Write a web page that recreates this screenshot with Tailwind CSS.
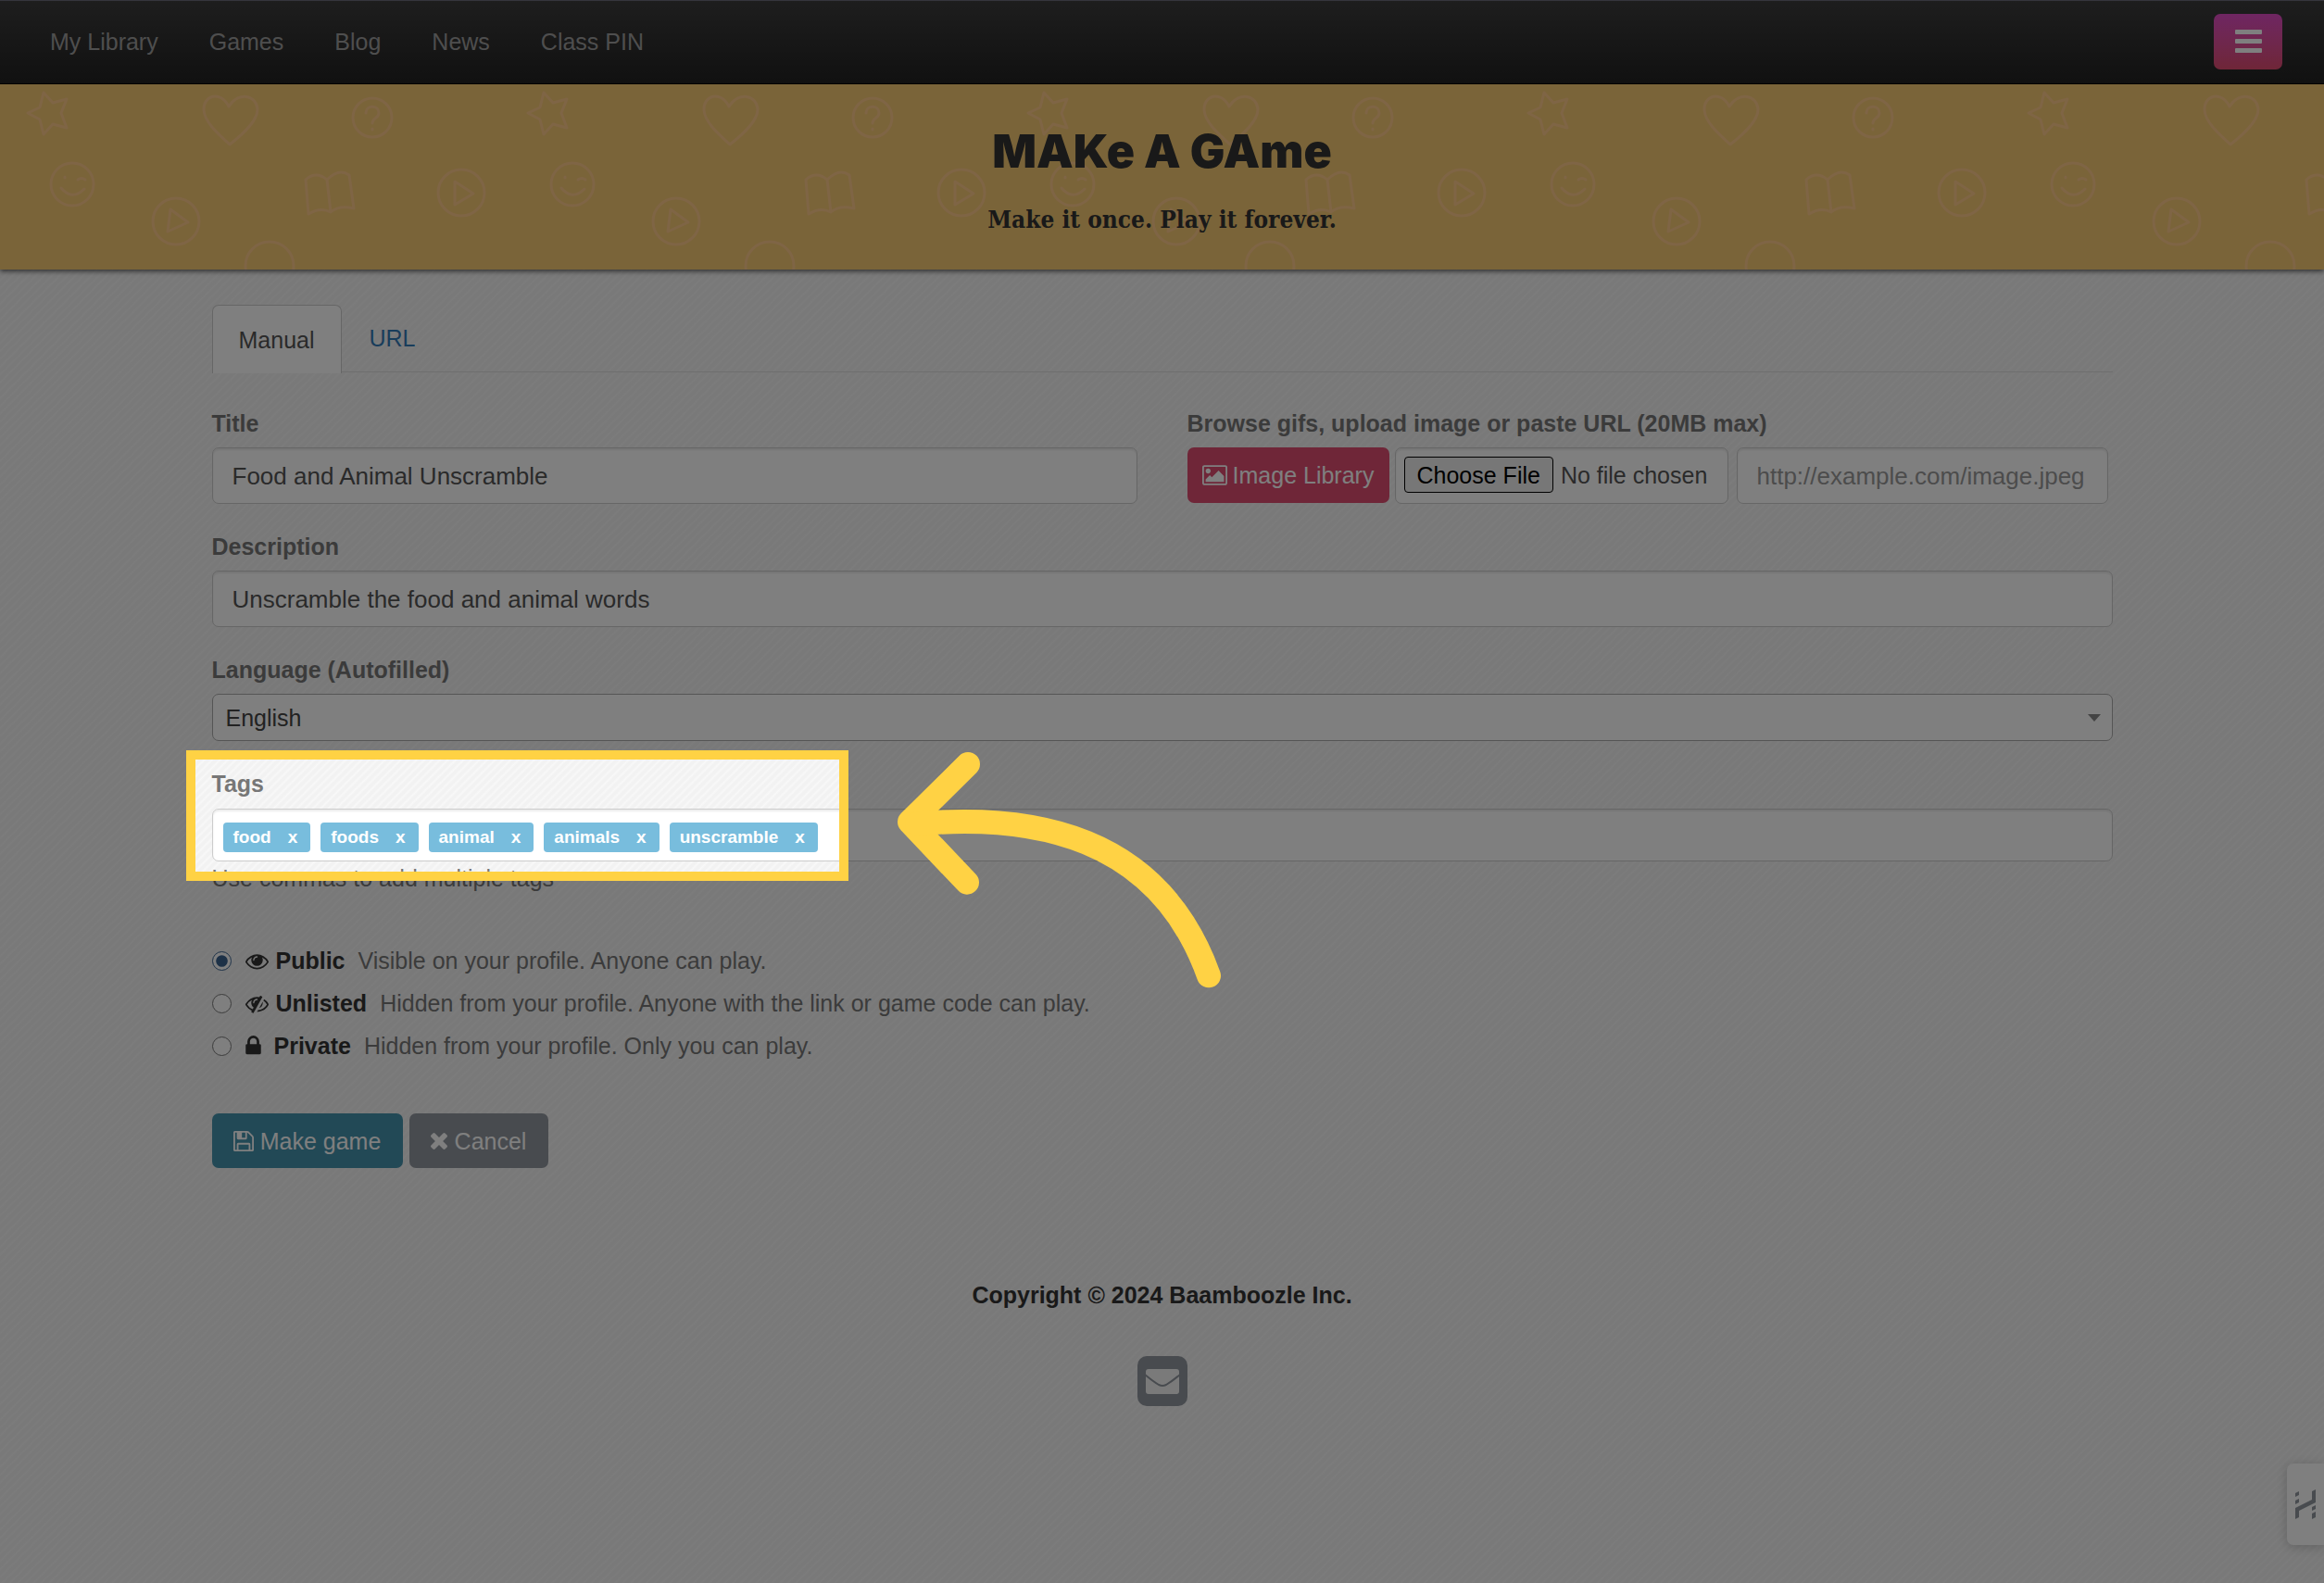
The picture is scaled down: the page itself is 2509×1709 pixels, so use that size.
<!DOCTYPE html>
<html lang="en">
  <head>
    <meta charset="UTF-8" />
    <meta name="viewport" content="width=device-width, initial-scale=1.0" />
    <title>Make a Game</title>
    <script src="https://cdn.jsdelivr.net/npm/@tailwindcss/browser@4"></script>
  </head>
  <body
    class="min-h-screen overflow-x-hidden bg-[#f5f5f5] bg-[repeating-linear-gradient(135deg,#f2f2f2_0px,#f2f2f2_2px,#f8f8f8_4px,#f2f2f2_6px)] font-['Liberation_Sans',sans-serif] text-[25px] leading-9 text-[#333]"
  >
    <nav class="flex h-[91px] items-center justify-between border-y border-t-[#6a6a7a] border-b-black bg-linear-to-b from-[#3c3c3c] to-[#222] pr-[45px] pb-[2px] pl-[54px]">
      <div class="flex gap-[55px] text-[#9d9d9d]">
        <a href="#">My Library</a>
        <a href="#">Games</a>
        <a href="#">Blog</a>
        <a href="#">News</a>
        <a href="#">Class PIN</a>
      </div>
      <button type="button" aria-label="Menu" class="flex h-[60px] w-[74px] flex-col items-center justify-center gap-[5px] rounded-[7px] bg-linear-to-b from-[#de4cc4] to-[#de4c70]">
        <span class="h-[5px] w-[29px] rounded-[1px] bg-white"></span>
        <span class="h-[5px] w-[29px] rounded-[1px] bg-white"></span>
        <span class="h-[5px] w-[29px] rounded-[1px] bg-white"></span>
      </button>
    </nav>

    <header class="relative h-[200px] bg-[#f4c872] text-center shadow-[0_2px_5px_rgba(0,0,0,0.6)]">
      <svg class="absolute inset-0 h-full w-full" aria-hidden="true">
        <defs>
          <pattern id="doodles" width="540" height="200" patternUnits="userSpaceOnUse">
            <g fill="none" stroke="#ffca8a" stroke-width="3" stroke-linejoin="round" stroke-linecap="round">
              <path d="M30 31 L43 25 L47 9 L57 20 L72 16 L66 31 L72 47 L57 43 L47 54 L43 38 Z" />
              <path d="M248 65 C236 54 221 41 220 28 C219 12 238 6 247 24 C258 7 277 12 278 27 C278 40 262 54 248 65 Z" />
              <circle cx="402" cy="36" r="21" />
              <path d="M395 31 C395 22 409 22 409 31 C409 37 402 36 402 42 M402 48 v1" />
              <circle cx="78" cy="108" r="23" />
              <path d="M70 100 v1 M84 103 q4 -3 8 0 M66 112 q12 14 25 1" />
              <circle cx="190" cy="148" r="25" />
              <path d="M184 135 L203 149 L181 159 Z" />
              <path d="M333 140 L330 103 Q341 93 353 103 Q366 90 377 98 L382 134 Q366 130 357 138 Q346 132 333 140 Z M353 103 L357 138" />
              <circle cx="498" cy="117" r="25" />
              <path d="M491 105 L511 118 L491 130 Z" />
              <circle cx="291" cy="196" r="26" />
            </g>
          </pattern>
        </defs>
        <rect width="100%" height="100%" fill="url(#doodles)" />
      </svg>
      <div class="relative pt-[40px]">
        <h1 class="font-[Inter] text-[50px] leading-[64px] font-black">MAKe A GAme</h1>
        <p class="mt-6 font-['DejaVu_Serif_Condensed','DejaVu_Serif',serif] text-[26px] leading-9 font-bold">Make it once. Play it forever.</p>
      </div>
    </header>

    <main class="mx-auto max-w-[2052px] pt-[38px]">
      <div class="flex h-[73px] border-b border-[#ddd]">
        <a href="#" class="flex h-[74px] items-center rounded-t-[7px] border border-b-0 border-[#ccc] bg-white px-7 text-[#555]">Manual</a>
        <a href="#" class="flex items-center px-[30px] text-[#337ab7]">URL</a>
      </div>

      <form class="pt-[37px]">
        <div class="grid grid-cols-2 gap-[54px]">
          <div>
            <label for="title" class="mb-2 block font-bold text-[#777]">Title</label>
            <input id="title" type="text" value="Food and Animal Unscramble" class="h-[61px] w-full rounded-[7px] border border-[#ccc] bg-white px-[21px] pt-[2px] text-[26px] text-[#555] shadow-[inset_0_2px_2px_rgba(0,0,0,0.08)]" />
          </div>
          <div>
            <label for="image-url" class="mb-2 block font-bold text-[#777]">Browse gifs, upload image or paste URL (20MB max)</label>
            <div class="flex items-start">
              <button type="button" class="mr-[6px] flex h-[60px] w-[218px] shrink-0 items-center justify-center gap-[6px] rounded-[7px] bg-[#de4c70] text-white">
                <svg class="h-[22px] w-[27px]" viewBox="-64 128 1920 1536" fill="currentColor">
                  <path d="M576 576q0 80-56 136t-136 56-136-56-56-136 56-136 136-56 136 56 56 136zm1024 384v448h-1408v-192l320-320 160 160 512-512zm96-704h-1600q-13 0-22.5 9.5t-9.5 22.5v1216q0 13 9.5 22.5t22.5 9.5h1600q13 0 22.5-9.5t9.5-22.5v-1216q0-13-9.5-22.5t-22.5-9.5zm160 32v1216q0 66-47 113t-113 47h-1600q-66 0-113-47t-47-113v-1216q0-66 47-113t113-47h1600q66 0 113 47t47 113z" />
                </svg>
                Image Library
              </button>
              <input
                type="file"
                aria-label="Upload image"
                class="mr-[9px] h-[61px] w-[360px] shrink-0 rounded-[7px] border border-[#ccc] bg-white px-[9px] pt-[9px] text-[#555] shadow-[inset_0_2px_2px_rgba(0,0,0,0.08)] file:mr-2 file:h-[39px] file:rounded-[4px] file:border file:border-solid file:border-black file:bg-[#efefef] file:px-[13px] file:text-black"
              />
              <input id="image-url" type="text" placeholder="http://example.com/image.jpeg" class="mr-[5px] h-[61px] min-w-0 flex-1 rounded-[7px] border border-[#ccc] bg-white px-[21px] pt-[2px] text-[26px] shadow-[inset_0_2px_2px_rgba(0,0,0,0.08)] placeholder:text-[#999]" />
            </div>
          </div>
        </div>

        <div class="mt-7">
          <label for="description" class="mb-2 block font-bold text-[#777]">Description</label>
          <input id="description" type="text" value="Unscramble the food and animal words" class="h-[61px] w-full rounded-[7px] border border-[#ccc] bg-white px-[21px] pt-[2px] text-[26px] text-[#555] shadow-[inset_0_2px_2px_rgba(0,0,0,0.08)]" />
        </div>

        <div class="mt-7">
          <label for="language" class="mb-2 block font-bold text-[#777]">Language (Autofilled)</label>
          <div class="relative">
            <select id="language" class="block h-[51px] w-full appearance-none rounded-[7px] border border-[#aaa] bg-white px-[14px] text-[#444]">
              <option>English</option>
            </select>
            <svg class="pointer-events-none absolute top-[22px] right-[13px] h-[8px] w-[14px]" viewBox="0 0 14 8"><path d="M0 0h14l-7 8z" fill="#888" /></svg>
          </div>
        </div>

        <div class="relative mt-7">
          <label for="tags" class="mb-[9px] block font-bold text-[#777]">Tags</label>
          <div class="flex h-[57px] items-center gap-[11px] rounded-[7px] border border-[#ccc] bg-white px-[11px] pt-[5px] text-[19px] leading-8 font-bold text-white shadow-[inset_0_2px_2px_rgba(0,0,0,0.08)]">
            <span class="flex h-8 gap-[18px] rounded-[4px] bg-[#78bddd] pr-[14px] pl-[11px]">food <button type="button" aria-label="Remove food">x</button></span>
            <span class="flex h-8 gap-[18px] rounded-[4px] bg-[#78bddd] pr-[14px] pl-[11px]">foods <button type="button" aria-label="Remove foods">x</button></span>
            <span class="flex h-8 gap-[18px] rounded-[4px] bg-[#78bddd] pr-[14px] pl-[11px]">animal <button type="button" aria-label="Remove animal">x</button></span>
            <span class="flex h-8 gap-[18px] rounded-[4px] bg-[#78bddd] pr-[14px] pl-[11px]">animals <button type="button" aria-label="Remove animals">x</button></span>
            <span class="flex h-8 gap-[18px] rounded-[4px] bg-[#78bddd] pr-[14px] pl-[11px]">unscramble <button type="button" aria-label="Remove unscramble">x</button></span>
            <input id="tags" type="text" class="min-w-0 flex-1 text-[#555] outline-none" />
          </div>
          <p class="text-[#777]">Use commas to add multiple tags</p>

          <!-- spotlight: everything outside the frame is dimmed by its shadow -->
          <div class="pointer-events-none absolute -top-[18px] -left-7 z-20 h-[141px] w-[715px] border-[10px] border-[#ffd244] shadow-[0_0_0_3000px_rgba(0,0,0,0.5)]"></div>
          <svg class="pointer-events-none absolute -top-[38px] left-[711px] z-30 h-[290px] w-[420px]" viewBox="0 0 1260 870" fill="none" stroke="#ffd244" stroke-width="78" stroke-linecap="round" stroke-linejoin="round">
            <path d="M315 105 L126 292 L312 488" />
            <path d="M150 298 C520 266 930 330 1095 790" />
          </svg>
        </div>

        <div class="mt-12 leading-[46px]">
          <label class="flex h-[46px] items-center">
            <input type="radio" name="visibility" checked class="mr-[15px] h-[21px] w-[21px] accent-[#3a628f]" />
            <svg class="mr-2 h-[25px] w-[25px]" viewBox="0 0 1792 1792" fill="currentColor">
              <path d="M1664 960q-152-236-381-353q61 104 61 225q0 185-131.5 316.5t-316.5 131.5t-316.5-131.5t-131.5-316.5q0-121 61-225q-229 117-381 353q133 205 333.5 326.5t434.5 121.5t434.5-121.5t333.5-326.5zM944 576q0-20-14-34t-34-14q-125 0-214.5 89.5t-89.5 214.5q0 20 14 34t34 14t34-14t14-34q0-86 61-147t147-61q20 0 34-14t14-34zM1792 960q0 34-20 69q-140 230-376.5 368.5t-499.5 138.5t-499.5-139t-376.5-368q-20-35-20-69t20-69q140-229 376.5-368t499.5-139t499.5 139t376.5 368q20 35 20 69z" />
            </svg>
            <b>Public</b>
            <span class="ml-[14px] text-[#777]">Visible on your profile. Anyone can play.</span>
          </label>
          <label class="flex h-[46px] items-center">
            <input type="radio" name="visibility" class="mr-[15px] h-[21px] w-[21px] accent-[#3a628f]" />
            <svg class="mr-2 h-[25px] w-[25px]" viewBox="0 0 1792 1792" fill="currentColor">
              <path d="M555 1335l78-141q-87-63-136-159t-49-203q0-121 61-225-229 117-381 353 167 258 427 375zm389-759q0-20-14-34t-34-14q-125 0-214.5 89.5t-89.5 214.5q0 20 14 34t34 14 34-14 14-34q0-86 61-147t147-61q20 0 34-14t14-34zm363-191q0 7-1 9-106 189-316 567t-315 566l-49 89q-10 16-28 16-12 0-134-70-16-10-16-28 0-12 44-87-143-65-263.5-173t-208.5-245q-20-31-20-69t20-69q153-235 380-371t496-136q89 0 180 17l54-97q10-16 28-16 5 0 18 6t31 15.5 33 18.5 31.5 18.5 19.5 11.5q16 10 16 27zm37 447q0 139-79 253.5t-209 164.5l280-502q8 45 8 84zm448 128q0 35-20 69-39 64-109 145-150 172-347.5 267t-419.5 95l74-132q212-18 392.5-137t301.5-307q-115-179-282-294l63-112q95 64 182.5 153t144.5 184q20 34 20 69z" />
            </svg>
            <b>Unlisted</b>
            <span class="ml-[14px] text-[#777]">Hidden from your profile. Anyone with the link or game code can play.</span>
          </label>
          <label class="flex h-[46px] items-center">
            <input type="radio" name="visibility" class="mr-[15px] h-[21px] w-[21px] accent-[#3a628f]" />
            <svg class="mr-[14px] h-[22px] w-[17px]" viewBox="320 128 1152 1536" fill="currentColor">
              <path d="M640 768h512v-192q0-106-75-181t-181-75-181 75-75 181v192zm832 96v576q0 40-28 68t-68 28h-960q-40 0-68-28t-28-68v-576q0-40 28-68t68-28h32v-192q0-184 132-316t316-132 316 132 132 316v192h32q40 0 68 28t28 68z" />
            </svg>
            <b>Private</b>
            <span class="ml-[14px] text-[#777]">Hidden from your profile. Only you can play.</span>
          </label>
        </div>

        <div class="mt-[50px] flex gap-[7px] text-white">
          <button type="submit" class="flex h-[59px] w-[206px] items-center justify-center gap-[7px] rounded-[7px] bg-[#4492ac]">
            <svg class="h-[22px] w-[22px]" viewBox="128 128 1536 1536" fill="currentColor">
              <path d="M512 1536h768v-384h-768v384zm896 0h128v-896q0-14-10-38.5t-20-34.5l-281-281q-10-10-34-20t-39-10v416q0 40-28 68t-68 28h-576q-40 0-68-28t-28-68v-416h-128v1280h128v-416q0-40 28-68t68-28h832q40 0 68 28t28 68v416zm-384-928v-320q0-13-9.5-22.5t-22.5-9.5h-192q-13 0-22.5 9.5t-9.5 22.5v320q0 13 9.5 22.5t22.5 9.5h192q13 0 22.5-9.5t9.5-22.5zm640 32v928q0 40-28 68t-68 28h-1344q-40 0-68-28t-28-68v-1344q0-40 28-68t68-28h928q40 0 88 20t76 48l280 280q28 28 48 76t20 88z" />
            </svg>
            Make game
          </button>
          <button type="button" class="flex h-[59px] w-[150px] items-center justify-center gap-2 rounded-[7px] bg-[#90969e]">
            <svg class="h-[18px] w-[18px]" viewBox="302 366 1188 1188" fill="currentColor">
              <path d="M1490 1322q0 40-28 68l-136 136q-28 28-68 28t-68-28l-294-294-294 294q-28 28-68 28t-68-28l-136-136q-28-28-28-68t28-68l294-294-294-294q-28-28-28-68t28-68l136-136q28-28 68-28t68 28l294 294 294-294q28-28 68-28t68 28l136 136q28 28 28 68t-28 68l-294 294 294 294q28 28 28 68z" />
            </svg>
            Cancel
          </button>
        </div>
      </form>
    </main>

    <footer class="mt-[119px] flex flex-col items-center gap-12">
      <p class="font-bold">Copyright © 2024 Baamboozle Inc.</p>
      <a href="#" aria-label="Email">
        <svg class="h-[54px] w-[54px]" viewBox="0 0 54 54">
          <rect width="54" height="54" rx="10" fill="#90969e" />
          <rect x="9" y="14" width="36" height="27" rx="3" fill="#f5f5f5" />
          <path d="M8 20 C14 25 18 28 23 31 Q27 33 31 31 C36 28 40 25 46 20" fill="none" stroke="#90969e" stroke-width="2" />
        </svg>
      </a>
    </footer>

    <button type="button" aria-label="Help" class="fixed right-0 bottom-[41px] z-10 flex h-[88px] w-10 items-center justify-center rounded-l-[7px] bg-white shadow-[0_2px_12px_rgba(0,0,0,0.2)]">
      <svg class="h-[32px] w-[24px]" viewBox="0 0 24 32" fill="#90969e">
        <path d="M1 4l4-2v4l-4 2zM1 12l4-2v4l-4 2zM1 20l18-9v-9l4-2v14l-18 9v7l-4 2zM19 19l4-2v4l-4 2zM19 26l4-2v6l-4 2z" />
      </svg>
    </button>
  </body>
</html>
